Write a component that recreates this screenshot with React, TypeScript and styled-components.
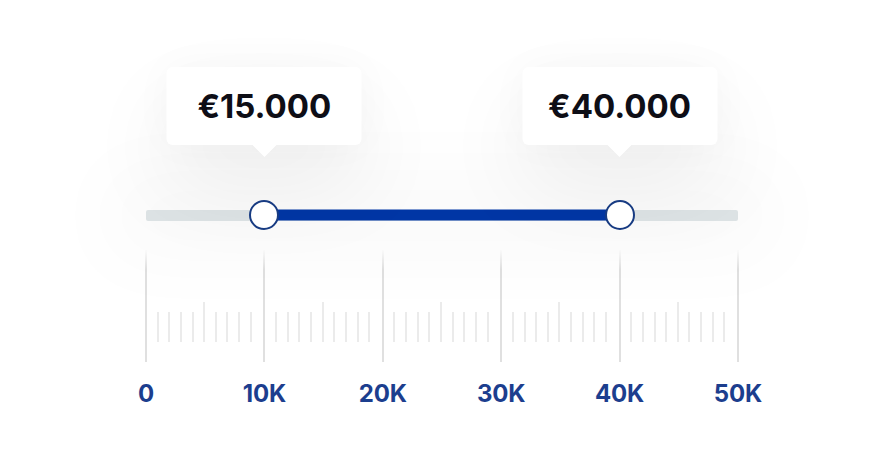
import React from 'react';
import styled, { createGlobalStyle } from 'styled-components';

const GlobalStyle = createGlobalStyle`
  html, body {
    margin: 0;
    padding: 0;
    background: #ffffff;
  }
  body {
    font-family: Inter, "Liberation Sans", sans-serif;
  }
`;

const MIN = 0;
const MAX = 50000;
const LABELS = ['0', '10K', '20K', '30K', '40K', '50K'];

// handle positions on the scale, tooltip values as shown
const handles = [
  { pos: 10000, value: '€15.000' },
  { pos: 40000, value: '€40.000' },
];

const pct = (v: number) => ((v - MIN) / (MAX - MIN)) * 100;

const App = () => {
  const from = pct(handles[0].pos);
  const to = pct(handles[1].pos);
  return (
    <>
      <GlobalStyle />
      <Page>
        <Slider>
          <TrackArea>
            <Rail />
            <Range style={{ left: `${from}%`, width: `${to - from}%` }} />
            {handles.map(h => (
              <React.Fragment key={h.value}>
                <Tooltip style={{ left: `${pct(h.pos)}%` }}>{h.value}</Tooltip>
                <Handle style={{ left: `${pct(h.pos)}%` }} />
              </React.Fragment>
            ))}
          </TrackArea>
          <Scale>
            {LABELS.slice(0, -1).map(l => (
              <Segment key={l}>
                {Array.from({ length: 9 }).map((_, i) => (
                  <Minor key={i} $mid={i === 4} />
                ))}
              </Segment>
            ))}
          </Scale>
          <Labels>
            {LABELS.map(l => (
              <Label key={l}>
                <span>{l}</span>
              </Label>
            ))}
          </Labels>
        </Slider>
      </Page>
    </>
  );
};

const Page = styled.div`
  width: 884px;
  height: 470px;
  overflow: hidden;
  background: #ffffff;
`;

const Slider = styled.div`
  width: 592px;
  margin-left: 146px;
  padding-top: 200px;
  display: flex;
  flex-direction: column;
`;

const TrackArea = styled.div`
  position: relative;
  height: 30px;
  display: flex;
  align-items: center;
`;

const Rail = styled.div`
  flex: 1;
  height: 11px;
  border-radius: 2px;
  background: #dde3e5;
  box-shadow: 0 0 80px 40px rgba(0, 0, 0, 0.022);
`;

const Range = styled.div`
  position: absolute;
  top: 50%;
  height: 11px;
  transform: translateY(-50%);
  background: #0036a5;
`;

const Handle = styled.div`
  position: absolute;
  top: 50%;
  width: 30px;
  height: 30px;
  box-sizing: border-box;
  border-radius: 50%;
  border: 2px solid #173b82;
  background: #ffffff;
  transform: translate(-50%, -50%);
`;

const Tooltip = styled.div`
  position: absolute;
  bottom: calc(100% + 55px);
  transform: translateX(-50%);
  width: 195px;
  height: 78px;
  border-radius: 6px;
  background: #ffffff;
  display: flex;
  align-items: center;
  justify-content: center;
  font-size: 33px;
  font-weight: 700;
  letter-spacing: 0;
  color: #0e0e16;
  box-shadow: 0 40px 90px rgba(0, 0, 0, 0.07), 0 0 40px rgba(0, 0, 0, 0.03);
  &::after {
    content: '';
    position: absolute;
    left: 50%;
    top: 100%;
    transform: translateX(-50%);
    border-left: 12px solid transparent;
    border-right: 12px solid transparent;
    border-top: 12px solid #ffffff;
  }
`;

const Scale = styled.div`
  margin-top: 20px;
  margin-left: -1px;
  height: 112px;
  display: flex;
  border-right: 2px solid;
  border-image: linear-gradient(to bottom, rgba(224, 224, 224, 0), #e0e0e0 18%) 1;
  width: 594px;
  box-sizing: border-box;
`;

const Segment = styled.div`
  flex: 1;
  display: grid;
  grid-template-columns: repeat(10, 1fr);
  align-items: end;
  padding-bottom: 20px;
  border-left: 2px solid;
  border-image: linear-gradient(to bottom, rgba(224, 224, 224, 0), #e0e0e0 18%) 1;
`;

const Minor = styled.div<{ $mid?: boolean }>`
  height: ${({ $mid }) => ($mid ? '40px' : '30px')};
  border-right: 2px solid #ebebeb;
`;

const Labels = styled.div`
  margin-top: 17px;
  display: flex;
  justify-content: space-between;
`;

const Label = styled.div`
  width: 0;
  display: flex;
  justify-content: center;
  > span {
    white-space: nowrap;
    font-size: 24px;
    font-weight: 700;
    letter-spacing: -0.2px;
    color: #1c3e8e;
  }
`;

export default App;
